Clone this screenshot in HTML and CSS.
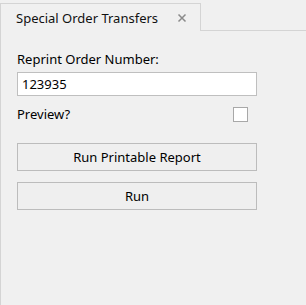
FILE: index.html
```html
<!DOCTYPE html>
<html>
<head>
<meta charset="utf-8">
<link rel="stylesheet" href="styles.css">
</head>
<body>
<div class="window">
  <div class="tabbar">
    <div class="tab">
      <span class="tab-title">Special Order Transfers</span>
      <span class="tab-close">
        <svg width="10" height="10" viewBox="0 0 10 10"><path d="M1.5 1.5L8.5 8.5M8.5 1.5L1.5 8.5" stroke="#8a8a8a" stroke-width="1.5" fill="none"/></svg>
      </span>
    </div>
    <div class="tab-rest"></div>
  </div>
  <div class="panel">
    <label class="label">Reprint Order Number:</label>
    <div class="input">123935</div>
    <div class="row">
      <span class="label">Preview?</span>
      <span class="checkbox"></span>
    </div>
    <div class="button first">Run Printable Report</div>
    <div class="button">Run</div>
  </div>
</div>
</body>
</html>
```
FILE: styles.css
```css
html, body {
  margin: 0;
  padding: 0;
  background: #f0f0f0;
}
.window {
  width: 306px;
  height: 305px;
  display: flex;
  flex-direction: column;
  font-family: "Noto Sans", sans-serif;
  font-size: 13px;
  color: #000;
  padding-top: 3px;
  box-sizing: border-box;
}
.tabbar {
  display: flex;
  height: 28px;
}
.tab {
  width: 201px;
  box-sizing: border-box;
  border-top: 1px solid #d4d4d4;
  border-right: 1px solid #d4d4d4;
  border-left: 1px solid #d4d4d4;
  display: flex;
  align-items: center;
  padding-left: 15px;
}
.tab-title {
  color: #111;
}
.tab-close {
  margin-left: 19px;
  display: flex;
  margin-top: 1px;
}
.tab-rest {
  flex: 1;
  border-bottom: 1px solid #d4d4d4;
}
.panel {
  flex: 1;
  border-left: 1px solid #d4d4d4;
  padding: 20px 0 0 16px;
  display: flex;
  flex-direction: column;
}
.label {
  display: block;
  line-height: 17px;
}
.input {
  margin-top: 4px;
  width: 240px;
  height: 24px;
  box-sizing: border-box;
  border: 1px solid #bfbfbf;
  background: #fff;
  padding-left: 4px;
  line-height: 22px;
}
.row {
  display: flex;
  align-items: center;
  width: 231px;
  justify-content: space-between;
  margin-top: 10px;
}
.checkbox {
  width: 15px;
  height: 15px;
  box-sizing: border-box;
  border: 1px solid #a8a8a8;
  background: #fff;
}
.button {
  width: 240px;
  height: 28px;
  box-sizing: border-box;
  border: 1px solid #bcbcbc;
  background: #efefef;
  display: flex;
  align-items: center;
  justify-content: center;
  margin-top: 11px;
}
.button.first {
  margin-top: 20px;
}
```
